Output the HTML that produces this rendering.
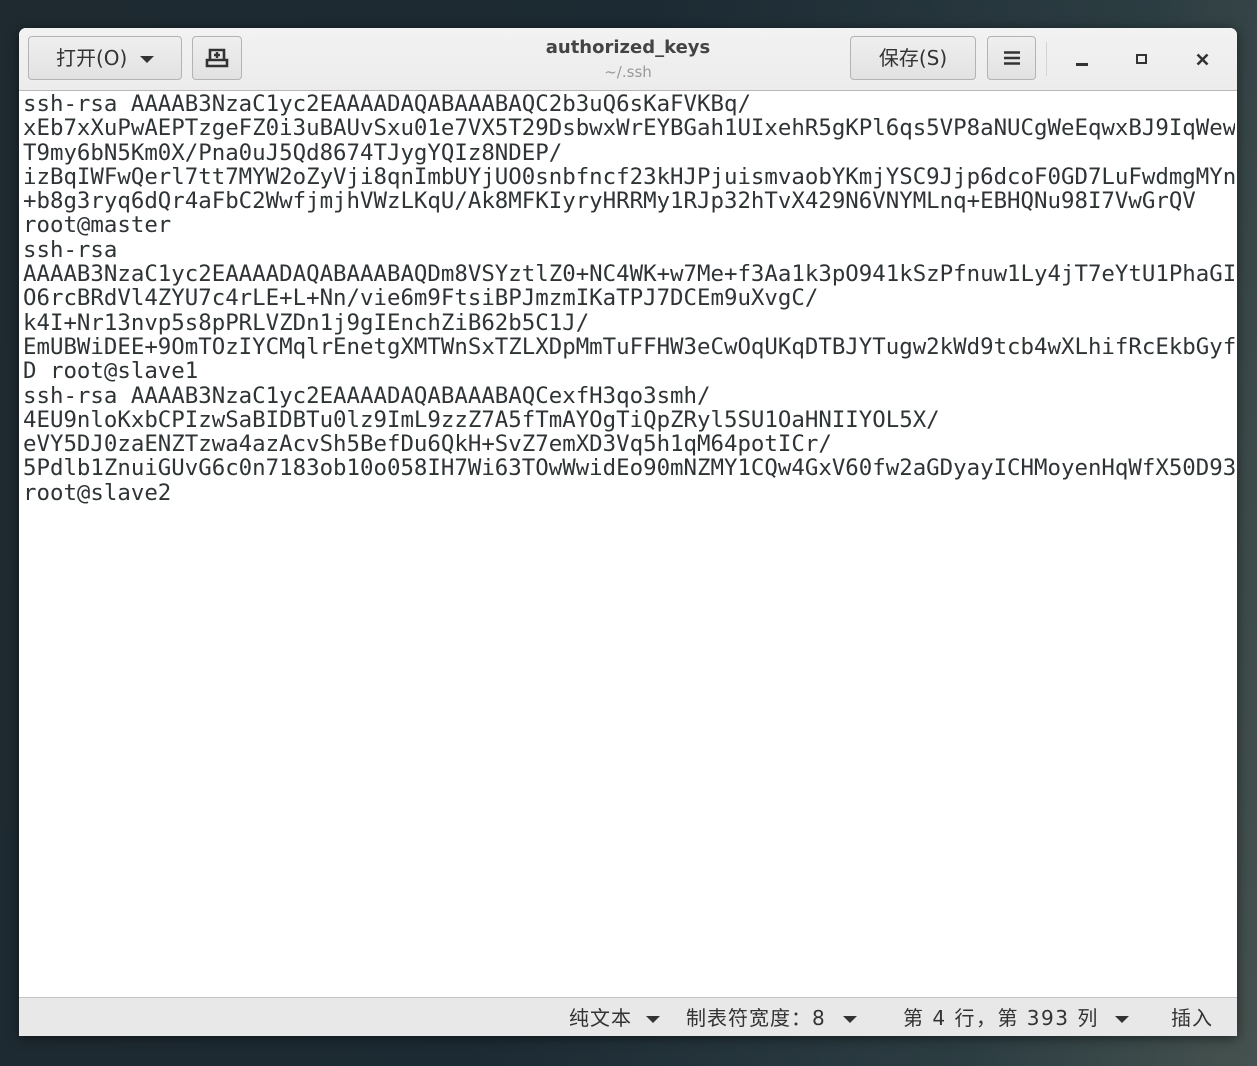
<!DOCTYPE html>
<html><head><meta charset="utf-8"><style>
html,body{margin:0;padding:0;}
body{width:1257px;height:1066px;overflow:hidden;position:relative;
background:linear-gradient(100deg,#1f2a30 0%,#1c2a33 45%,#2c3d42 80%,#46524f 100%);
font-family:"DejaVu Sans","Liberation Sans","Noto Sans CJK SC",sans-serif;}
.win{position:absolute;left:19px;top:28px;width:1218px;height:1008px;background:#fff;border-radius:7px 7px 0 0;overflow:hidden;box-shadow:0 2px 12px rgba(0,0,0,.5);}
.hdr{position:absolute;left:0;top:0;width:1218px;height:62px;background:linear-gradient(#f2f2f2,#ececec);border-bottom:1px solid #b8b8b8;}
.btn{position:absolute;top:8px;height:44px;border:1px solid #b3b3b3;border-radius:4px;background:linear-gradient(#efefef,#e2e2e2);box-sizing:border-box;color:#333;font-size:20px;line-height:42px;text-align:center;font-family:"DejaVu Sans","Noto Sans CJK SC",sans-serif;}
.tri{display:inline-block;width:0;height:0;border-left:7px solid transparent;border-right:7px solid transparent;border-top:7px solid #333;vertical-align:middle;}
.title{position:absolute;left:0;width:1218px;text-align:center;}
.txt{position:absolute;left:4px;top:63px;width:1212px;height:905px;overflow:hidden;
font-family:"DejaVu Sans Mono","Liberation Mono",monospace;font-size:22.4px;line-height:24.3px;color:#2e3436;white-space:pre;padding-top:1px;}
.sb{position:absolute;left:0;top:969px;width:1218px;height:39px;background:#e8e8e8;border-top:1px solid #c4c4c4;font-size:20px;color:#333;font-family:"DejaVu Sans","Noto Sans CJK SC",sans-serif;}
.sb span{position:absolute;top:4px;white-space:nowrap;}
.sb .tri{position:absolute;top:18px;}
</style></head><body>
<div class="win">
 <div class="hdr">
  <div class="btn" style="left:9px;width:154px;">打开(O)&nbsp;&nbsp;<span class="tri"></span></div>
  <div class="btn" style="left:173px;width:50px;">
   <svg width="24" height="22" viewBox="0 0 24 22" style="vertical-align:middle;margin-top:-3px"><path d="M5 3h14v10H5z M2 13h20v6H2z" fill="none" stroke="#333" stroke-width="2.6"/><path d="M12 5v6M9 8h6" stroke="#333" stroke-width="2.4"/></svg>
  </div>
  <div class="title" style="top:9px;font-size:18px;font-weight:bold;color:#444;">authorized_keys</div>
  <div class="title" style="top:35px;font-size:15px;color:#999;">~/.ssh</div>
  <div class="btn" style="left:831px;width:126px;">保存(S)</div>
  <div class="btn" style="left:968px;width:49px;"><svg width="18" height="16" viewBox="0 0 18 16" style="vertical-align:middle;margin-top:-3px"><path d="M1 2.5h16M1 8h16M1 13.5h16" stroke="#333" stroke-width="2.6"/></svg></div>
  <div style="position:absolute;left:1027px;top:14px;width:1px;height:34px;background:#d4d4d4"></div>
  <div style="position:absolute;left:1057px;top:35px;width:12px;height:3px;background:#333"></div>
  <div style="position:absolute;left:1117px;top:26px;width:11px;height:10px;border:2.5px solid #333;box-sizing:border-box"></div>
  <svg style="position:absolute;left:1177px;top:25px" width="13" height="13" viewBox="0 0 13 13"><path d="M1.5 1.5l10 10M11.5 1.5l-10 10" stroke="#333" stroke-width="2.6"/></svg>
 </div>
 <div class="txt">ssh-rsa AAAAB3NzaC1yc2EAAAADAQABAAABAQC2b3uQ6sKaFVKBq/
xEb7xXuPwAEPTzgeFZ0i3uBAUvSxu01e7VX5T29DsbwxWrEYBGah1UIxehR5gKPl6qs5VP8aNUCgWeEqwxBJ9IqWew
T9my6bN5Km0X/Pna0uJ5Qd8674TJygYQIz8NDEP/
izBqIWFwQerl7tt7MYW2oZyVji8qnImbUYjUO0snbfncf23kHJPjuismvaobYKmjYSC9Jjp6dcoF0GD7LuFwdmgMYn
+b8g3ryq6dQr4aFbC2WwfjmjhVWzLKqU/Ak8MFKIyryHRRMy1RJp32hTvX429N6VNYMLnq+EBHQNu98I7VwGrQV
root@master
ssh-rsa
AAAAB3NzaC1yc2EAAAADAQABAAABAQDm8VSYztlZ0+NC4WK+w7Me+f3Aa1k3pO941kSzPfnuw1Ly4jT7eYtU1PhaGI
O6rcBRdVl4ZYU7c4rLE+L+Nn/vie6m9FtsiBPJmzmIKaTPJ7DCEm9uXvgC/
k4I+Nr13nvp5s8pPRLVZDn1j9gIEnchZiB62b5C1J/
EmUBWiDEE+9OmTOzIYCMqlrEnetgXMTWnSxTZLXDpMmTuFFHW3eCwOqUKqDTBJYTugw2kWd9tcb4wXLhifRcEkbGyf
D root@slave1
ssh-rsa AAAAB3NzaC1yc2EAAAADAQABAAABAQCexfH3qo3smh/
4EU9nloKxbCPIzwSaBIDBTu0lz9ImL9zzZ7A5fTmAYOgTiQpZRyl5SU1OaHNIIYOL5X/
eVY5DJ0zaENZTzwa4azAcvSh5BefDu6QkH+SvZ7emXD3Vq5h1qM64potICr/
5Pdlb1ZnuiGUvG6c0n7183ob10o058IH7Wi63TOwWwidEo90mNZMY1CQw4GxV60fw2aGDyayICHMoyenHqWfX50D93
root@slave2</div>
 <div class="sb">
  <span style="left:550px;letter-spacing:1px">纯文本</span><i class="tri" style="left:627px"></i>
  <span style="left:667px;letter-spacing:1px">制表符宽度：8</span><i class="tri" style="left:824px"></i>
  <span style="left:884px;letter-spacing:1.5px">第 4 行，第 393 列</span><i class="tri" style="left:1096px"></i>
  <span style="left:1152px;letter-spacing:1px">插入</span>
 </div>
</div>
</body></html>
